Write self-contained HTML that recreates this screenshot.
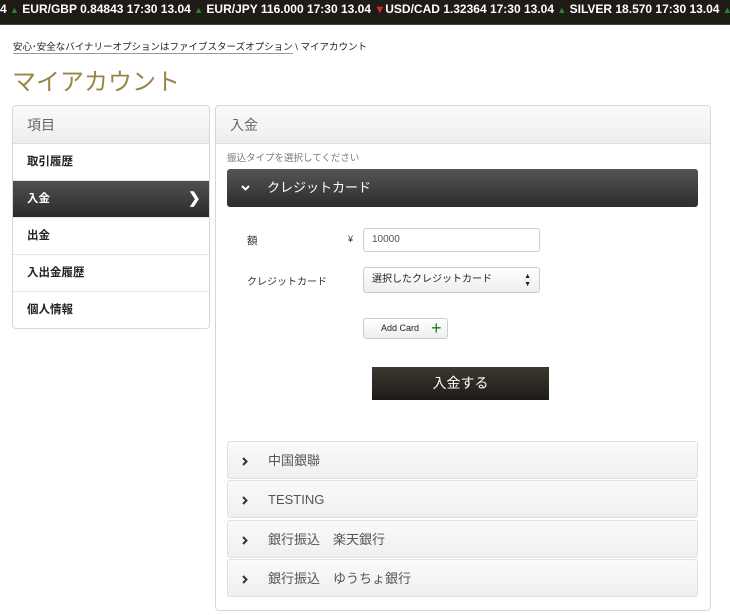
<!DOCTYPE html>
<html><head><meta charset="utf-8"><style>
*{margin:0;padding:0;box-sizing:border-box}
body{width:730px;height:615px;background:#fff;font-family:"Liberation Sans","Noto Sans CJK JP",sans-serif;position:relative;overflow:hidden;color:#333}
.tk{position:absolute;left:0;top:0;width:730px;height:25px;background:#1f1b17;border-bottom:1px solid #444;color:#fff;font-weight:bold;font-size:12px;line-height:19px;white-space:nowrap;overflow:hidden}
.up{color:#2a8a2a;font-size:9px}.dn{color:#e22;font-size:11px}
.abs{position:absolute}
.panel{position:absolute;border:1px solid #d8d8d8;border-radius:4px;background:#fff}
.ph{height:38px;background:linear-gradient(#fafafa,#eee);border-bottom:1px solid #ddd;font-size:14px;color:#666;line-height:38px;padding-left:14px;border-radius:4px 4px 0 0}
.it{position:relative;height:37px;border-bottom:1px solid #e5e5e5;font-size:11.5px;font-weight:bold;line-height:36px;padding-left:14px;color:#222}
.it.on{background:linear-gradient(#505050,#2b2b2b);color:#fff}
.acc{position:absolute;left:227px;width:471px;height:38px;border:1px solid #e0e0e0;border-radius:3px;background:linear-gradient(#fafafa,#efefef);font-size:13px;color:#555;line-height:37px;padding-left:40px}
.acc svg{position:absolute;left:14px;top:15px}
.inp{position:absolute;border:1px solid #ccc;border-radius:3px;background:#fff;font-size:10px;line-height:22px;padding-left:8px;color:#555}
</style></head><body>
<div class="tk">4 <span class="up">▲</span> EUR/GBP 0.84843 17:30 13.04 <span class="up">▲</span> EUR/JPY 116.000 17:30 13.04 <span class="dn">▼</span>USD/CAD 1.32364 17:30 13.04 <span class="up">▲</span> SILVER 18.570 17:30 13.04 <span class="up">▲</span> GOLD</div>
<div class="abs" style="left:13px;top:39px;font-size:9.5px;color:#222"><span style="border-bottom:1px solid #999">安心･安全なバイナリーオプションはファイブスターズオプション</span> \ マイアカウント</div>
<div class="abs" style="left:12px;top:62px;font-size:24px;color:#9a8548">マイアカウント</div>
<div class="panel" style="left:12px;top:105px;width:198px;height:224px;overflow:hidden">
<div class="ph">項目</div>
<div class="it">取引履歴</div>
<div class="it on">入金<span style="position:absolute;left:175px;top:0;font-size:15px">❯</span></div>
<div class="it">出金</div>
<div class="it">入出金履歴</div>
<div class="it" style="border:0">個人情報</div>
</div>
<div class="panel" style="left:215px;top:105px;width:496px;height:506px">
<div class="ph">入金</div>
</div>
<div class="abs" style="left:227px;top:150px;font-size:9.5px;color:#777">振込タイプを選択してください</div>
<div class="abs" style="left:227px;top:169px;width:471px;height:38px;border-radius:3px;background:linear-gradient(#555,#2c2c2c);color:#fff;font-size:13px;line-height:38px;padding-left:40px"><svg style="position:absolute;left:14px;top:16px" width="9" height="6" viewBox="0 0 9 6"><path d="M1 1L4.5 4.5L8 1" stroke="#fff" stroke-width="2" fill="none"/></svg>クレジットカード</div>
<div class="abs" style="left:247px;top:233px;font-size:10.5px">額</div>
<div class="abs" style="left:348px;top:234px;font-size:9px">¥</div>
<div class="inp" style="left:363px;top:228px;width:177px;height:24px">10000</div>
<div class="abs" style="left:247px;top:273px;font-size:10px">クレジットカード</div>
<div class="inp" style="left:363px;top:267px;width:177px;height:26px;background:linear-gradient(#fff,#eee);color:#222;line-height:24px">選択したクレジットカード<span style="position:absolute;right:8px;font-size:7px;line-height:8px;top:5px">▲<br>▼</span></div>
<div class="inp" style="left:363px;top:318px;width:85px;height:21px;background:linear-gradient(#fff,#eee);color:#222;font-size:9px;line-height:19px;padding-left:17px">Add Card<span style="position:absolute;left:67px;top:-2px;color:#1a7a1a;font-size:18px;line-height:22px">+</span></div>
<div class="abs" style="left:372px;top:367px;width:177px;height:33px;background:linear-gradient(#3d3830,#1e1b17);color:#fff;font-size:14px;text-align:center;line-height:33px">入金する</div>
<div class="acc" style="top:441px"><svg width="6" height="9" viewBox="0 0 6 9"><path d="M1 1L4.5 4.5L1 8" stroke="#333" stroke-width="2" fill="none"/></svg>中国銀聯</div>
<div class="acc" style="top:480px"><svg width="6" height="9" viewBox="0 0 6 9"><path d="M1 1L4.5 4.5L1 8" stroke="#333" stroke-width="2" fill="none"/></svg>TESTING</div>
<div class="acc" style="top:520px"><svg width="6" height="9" viewBox="0 0 6 9"><path d="M1 1L4.5 4.5L1 8" stroke="#333" stroke-width="2" fill="none"/></svg>銀行振込　楽天銀行</div>
<div class="acc" style="top:559px"><svg width="6" height="9" viewBox="0 0 6 9"><path d="M1 1L4.5 4.5L1 8" stroke="#333" stroke-width="2" fill="none"/></svg>銀行振込　ゆうちょ銀行</div>
</body></html>
